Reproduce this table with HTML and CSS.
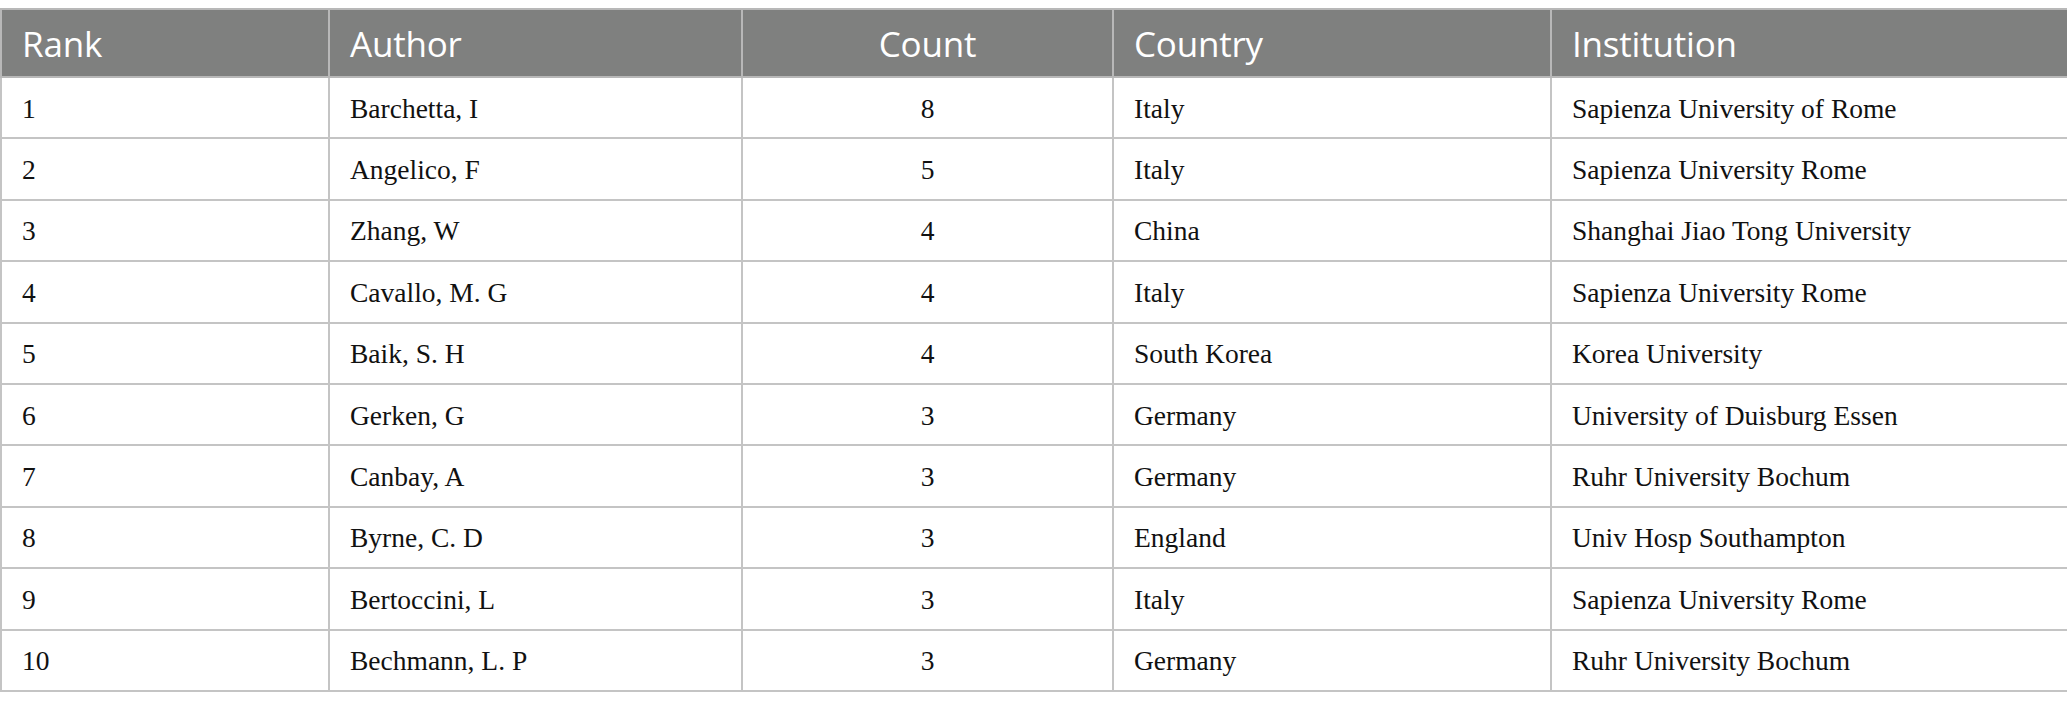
FILE: index.html
```html
<!DOCTYPE html>
<html>
<head>
<meta charset="utf-8">
<link rel="stylesheet" href="styles.css">
</head>
<body>
<table class="data">
  <colgroup>
    <col class="c-rank"><col class="c-author"><col class="c-count"><col class="c-country"><col class="c-inst">
  </colgroup>
  <thead>
    <tr><th>Rank</th><th>Author</th><th class="center">Count</th><th>Country</th><th>Institution</th></tr>
  </thead>
  <tbody>
    <tr><td>1</td><td>Barchetta, I</td><td class="center">8</td><td>Italy</td><td>Sapienza University of Rome</td></tr>
    <tr><td>2</td><td>Angelico, F</td><td class="center">5</td><td>Italy</td><td>Sapienza University Rome</td></tr>
    <tr><td>3</td><td>Zhang, W</td><td class="center">4</td><td>China</td><td>Shanghai Jiao Tong University</td></tr>
    <tr><td>4</td><td>Cavallo, M. G</td><td class="center">4</td><td>Italy</td><td>Sapienza University Rome</td></tr>
    <tr><td>5</td><td>Baik, S. H</td><td class="center">4</td><td>South Korea</td><td>Korea University</td></tr>
    <tr><td>6</td><td>Gerken, G</td><td class="center">3</td><td>Germany</td><td>University of Duisburg Essen</td></tr>
    <tr><td>7</td><td>Canbay, A</td><td class="center">3</td><td>Germany</td><td>Ruhr University Bochum</td></tr>
    <tr><td>8</td><td>Byrne, C. D</td><td class="center">3</td><td>England</td><td>Univ Hosp Southampton</td></tr>
    <tr><td>9</td><td>Bertoccini, L</td><td class="center">3</td><td>Italy</td><td>Sapienza University Rome</td></tr>
    <tr><td>10</td><td>Bechmann, L. P</td><td class="center">3</td><td>Germany</td><td>Ruhr University Bochum</td></tr>
  </tbody>
</table>
</body>
</html>
```
FILE: styles.css
```css
html, body {
  background: #ffffff;
}
body {
  margin: 8px 0 0 0;
}
.data {
  width: 2067px;
  border-collapse: collapse;
  table-layout: fixed;
}
.c-rank { width: 328px; }
.c-author { width: 413px; }
.c-count { width: 371px; }
.c-country { width: 438px; }
.c-inst { width: 517px; }
.data th, .data td {
  border: 2px solid #c4c4c4;
  text-align: left;
  padding: 0 0 0 20px;
  white-space: nowrap;
}
.data th {
  background: #7f807f;
  color: #ffffff;
  font-family: "Open Sans", "Noto Sans", sans-serif;
  font-weight: 400;
  font-size: 35px;
  letter-spacing: -0.2px;
  height: 66px;
  border-color: #b8b8b8;
}
.data td {
  color: #111111;
  font-family: "Liberation Serif", "Times New Roman", serif;
  font-size: 27.5px;
  height: 57.4px;
  padding-top: 2px;
}
.data .center {
  text-align: center;
  padding-left: 0;
}
```
